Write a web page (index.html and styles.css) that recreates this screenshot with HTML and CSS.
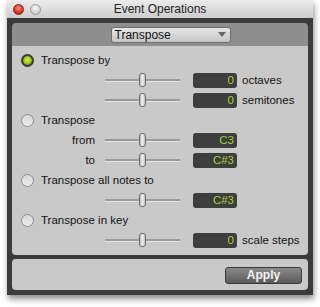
FILE: index.html
```html
<!DOCTYPE html>
<html>
<head>
<meta charset="utf-8">
<link rel="stylesheet" href="styles.css">
</head>
<body>
<div class="window">
  <div class="titlebar">
    <span class="light close"></span>
    <span class="light min"></span>
    <span class="title">Event Operations</span>
  </div>
  <div class="frame">
    <div class="card">
      <div class="header">
        <div class="select"><span>Transpose</span><span class="arrow"></span></div>
      </div>
      <div class="main">
        <div class="row radio-row"><span class="radio on"></span><span>Transpose by</span></div>
        <div class="row"><span class="label"></span><span class="track"><span class="thumb"></span></span><span class="box">0</span><span class="unit">octaves</span></div>
        <div class="row"><span class="label"></span><span class="track"><span class="thumb"></span></span><span class="box">0</span><span class="unit">semitones</span></div>
        <div class="row radio-row"><span class="radio"></span><span>Transpose</span></div>
        <div class="row"><span class="label">from</span><span class="track"><span class="thumb"></span></span><span class="box">C3</span></div>
        <div class="row"><span class="label">to</span><span class="track"><span class="thumb"></span></span><span class="box">C#3</span></div>
        <div class="row radio-row"><span class="radio"></span><span>Transpose all notes to</span></div>
        <div class="row"><span class="label"></span><span class="track"><span class="thumb"></span></span><span class="box">C#3</span></div>
        <div class="row radio-row"><span class="radio"></span><span>Transpose in key</span></div>
        <div class="row"><span class="label"></span><span class="track"><span class="thumb"></span></span><span class="box">0</span><span class="unit">scale steps</span></div>
      </div>
    </div>
    <div class="footer">
      <button class="apply">Apply</button>
    </div>
  </div>
</div>
</body>
</html>
```
FILE: styles.css
```css
html, body {
  margin: 0;
  padding: 0;
  background: #ffffff;
}
body {
  font-family: "Liberation Sans", Arial, sans-serif;
  font-size: 11px;
  color: #111;
  width: 320px;
  height: 307px;
  overflow: hidden;
}
.window {
  margin-left: 7px;
  width: 306px;
  box-shadow: 1px 4px 6px rgba(0,0,0,0.45);
}
.titlebar {
  height: 18px;
  background: linear-gradient(#ececec, #cdcdcd);
  display: flex;
  align-items: center;
}
.light {
  width: 11px;
  height: 11px;
  border-radius: 50%;
  margin-left: 6px;
  box-sizing: border-box;
}
.light.close {
  background: radial-gradient(circle at 50% 35%, #ff9a8a 0%, #e0352c 55%, #a81510 100%);
  border: 1px solid #8a1f18;
}
.light.min {
  background: radial-gradient(circle at 50% 35%, #f4f4f4 0%, #d6d6d6 60%, #b8b8b8 100%);
  border: 1px solid #9a9a9a;
}
.title {
  flex: 1;
  text-align: center;
  color: #222;
  margin-right: 34px;
  font-size: 12px;
}
.frame {
  background: #3b3b3b;
  padding: 5px;
  display: flex;
  flex-direction: column;
  gap: 4px;
}
.card {
  border-radius: 4px;
  overflow: hidden;
}
.header {
  height: 23px;
  background: #8e8e8e;
  display: flex;
  align-items: center;
  justify-content: center;
}
.select {
  width: 120px;
  height: 16px;
  box-sizing: border-box;
  border: 1px solid #6e6e6e;
  border-radius: 3px;
  background: linear-gradient(#e6e6e6, #c6c6c6);
  display: flex;
  align-items: center;
  justify-content: space-between;
  padding: 0 4px 0 3px;
  font-size: 12px;
  color: #111;
  margin-left: 21px;
}
.arrow {
  width: 0;
  height: 0;
  border-left: 4px solid transparent;
  border-right: 4px solid transparent;
  border-top: 5px solid #666;
}
.main {
  background: #c9c9c9;
  padding: 4px 0 5px 0;
}
.row {
  height: 20px;
  display: flex;
  align-items: center;
}
.radio-row {
  padding-left: 9px;
  gap: 7px;
  font-size: 11.5px;
}
.radio {
  width: 13px;
  height: 13px;
  border-radius: 50%;
  box-sizing: border-box;
  border: 1px solid #8c8c8c;
  background: linear-gradient(#d8d8d8, #ececec);
}
.radio.on {
  border: 2px solid #3a3a3a;
  background: radial-gradient(circle at 50% 45%, #d8f040 0%, #a8d020 45%, #506018 100%);
}
.label {
  width: 83px;
  text-align: right;
  font-size: 11.5px;
}
.track {
  margin-left: 10px;
  width: 75px;
  height: 2px;
  background: #9a9a9a;
  border-bottom: 1px solid #e4e4e4;
  position: relative;
}
.thumb {
  position: absolute;
  left: 34px;
  top: -6px;
  width: 7px;
  height: 14px;
  box-sizing: border-box;
  border: 1px solid #6a6a6a;
  border-radius: 3px;
  background: linear-gradient(90deg, #bdbdbd, #f2f2f2 50%, #bdbdbd);
}
.box {
  margin-left: 13px;
  width: 44px;
  height: 15px;
  box-sizing: border-box;
  background: #3e3e3e;
  border-radius: 3px;
  color: #a8d03a;
  text-align: right;
  padding-right: 3px;
  font-size: 11.5px;
  line-height: 15px;
}
.unit {
  margin-left: 5px;
  font-size: 11.5px;
}
.footer {
  height: 31px;
  background: #c9c9c9;
  border-radius: 4px;
  display: flex;
  align-items: center;
  justify-content: flex-end;
  padding-right: 6px;
}
.apply {
  width: 77px;
  height: 17px;
  border: 1px solid #3a3a3a;
  border-radius: 3px;
  background: linear-gradient(#8a8a8a, #5a5a5a);
  color: #f4f4f4;
  font-family: "Liberation Sans", Arial, sans-serif;
  font-weight: bold;
  font-size: 12px;
  padding: 0;
  margin-top: 1px;
}
```
